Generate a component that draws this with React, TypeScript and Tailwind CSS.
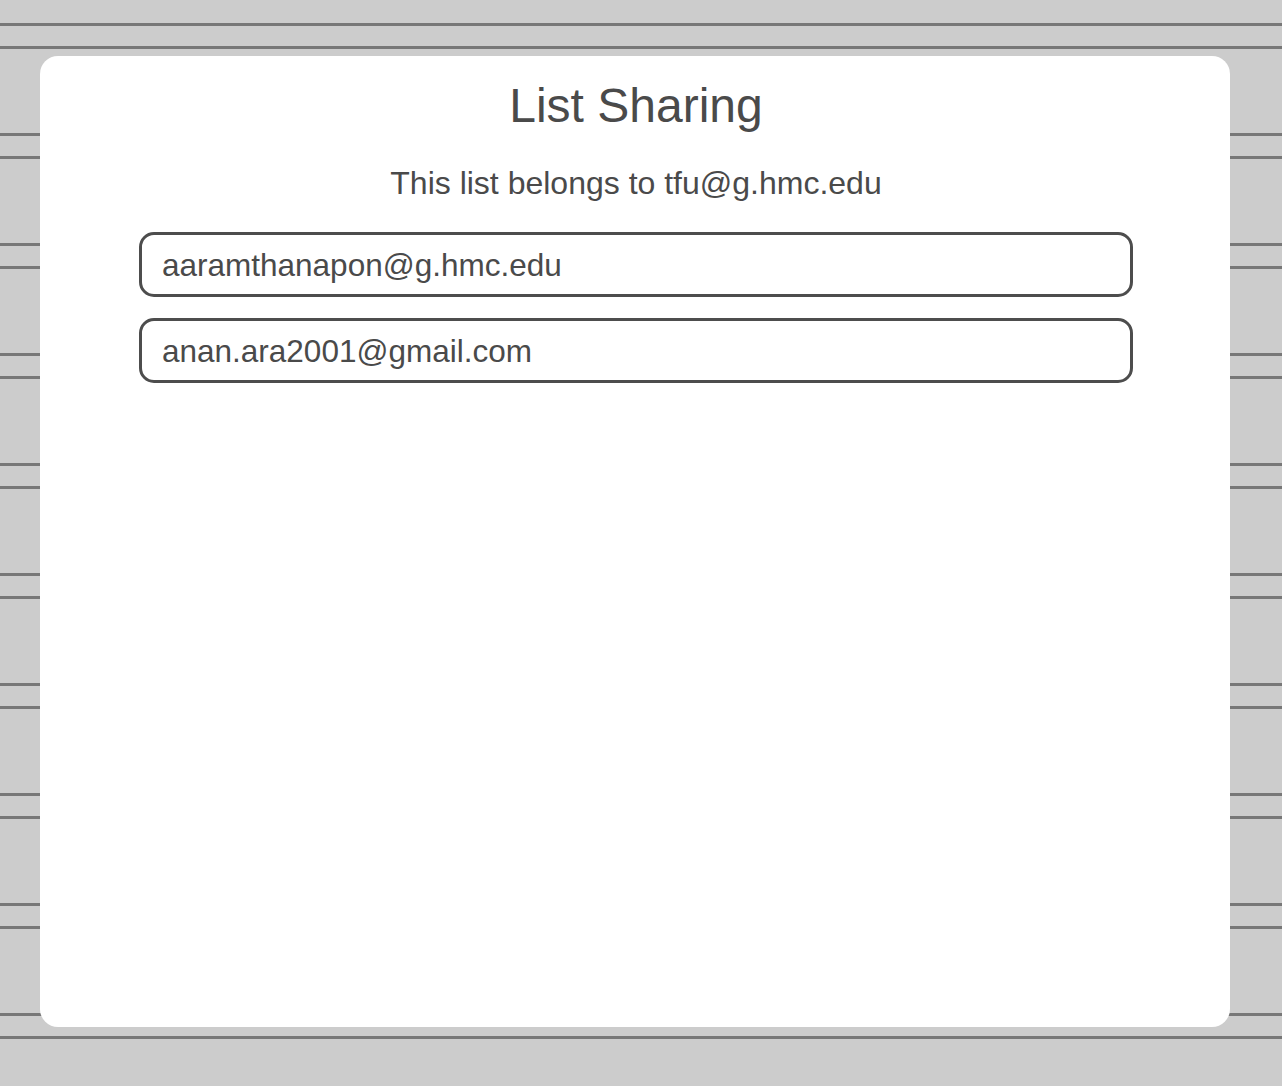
const emails = ["aaramthanapon@g.hmc.edu", "anan.ara2001@gmail.com"];

export default function App() {
  return (
    <div
      className="h-[1086px] w-full overflow-hidden bg-[#cccccc] bg-[repeating-linear-gradient(to_bottom,transparent_0px,transparent_23px,#777777_23px,#777777_26px,transparent_26px,transparent_46px,#777777_46px,#777777_49px,transparent_49px,transparent_110px)] pt-[56px] pl-[40px]"
      style={{ fontFamily: '"Liberation Sans", Arial, sans-serif' }}
    >
      <div className="flex h-[971px] w-[1190px] flex-col items-center rounded-[18px] bg-white pl-[99px] pr-[97px] pt-[22px] text-[#4a4a4a]">
        <h1 className="text-[48px] leading-[55px]">List Sharing</h1>
        <p className="mt-[32px] text-[32px] leading-[37px]">This list belongs to tfu@g.hmc.edu</p>
        <div className="mt-[30px] flex w-full flex-col gap-[21px]">
          {emails.map((email) => (
            <div
              key={email}
              className="flex h-[65px] w-full items-center rounded-[15px] border-[3px] border-[#4d4d4d] pl-[20px] pt-[2px] text-[31.5px] leading-[37px]"
            >
              {email}
            </div>
          ))}
        </div>
      </div>
    </div>
  );
}
